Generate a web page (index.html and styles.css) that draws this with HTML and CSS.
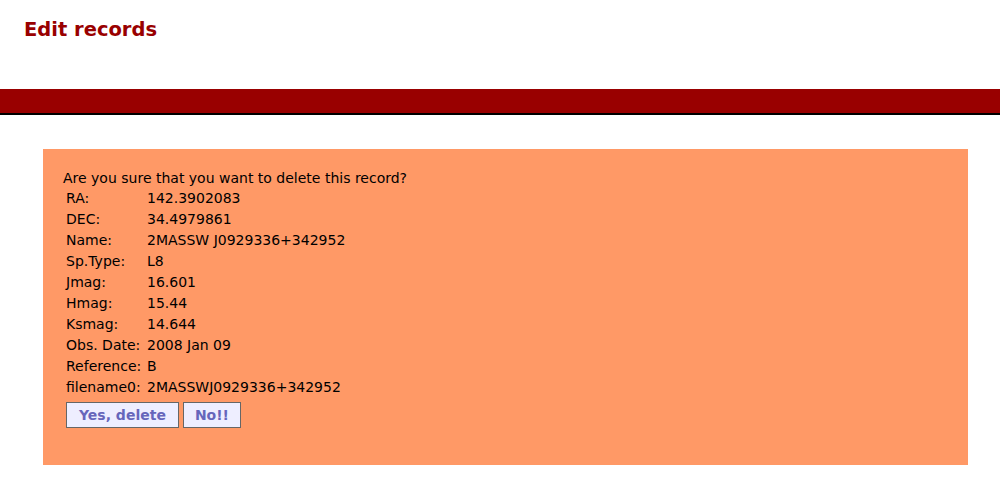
FILE: index.html
```html
<!DOCTYPE html>
<html lang="en">
<head>
    <meta charset="UTF-8">
    <title>Edit records</title>
    <link rel="stylesheet" href="styles.css">
</head>
<body>
<div class="header">
    <h1>Edit records</h1>
</div>
<div class="bar"></div>

<div class="content">
    <div class="confirm-box">
        <p class="question">Are you sure that you want to delete this record?</p>
        <table class="record">
            <tr><td>RA:</td><td>142.3902083</td></tr>
            <tr><td>DEC:</td><td>34.4979861</td></tr>
            <tr><td>Name:</td><td>2MASSW J0929336+342952</td></tr>
            <tr><td>Sp.Type:</td><td>L8</td></tr>
            <tr><td>Jmag:</td><td>16.601</td></tr>
            <tr><td>Hmag:</td><td>15.44</td></tr>
            <tr><td>Ksmag:</td><td>14.644</td></tr>
            <tr><td>Obs. Date:</td><td>2008 Jan 09</td></tr>
            <tr><td>Reference:</td><td>B</td></tr>
            <tr><td>filename0:</td><td>2MASSWJ0929336+342952</td></tr>
        </table>
        <div class="buttons">
            <button class="btn">Yes, delete</button>
            <button class="btn btn-no">No!!</button>
        </div>
    </div>
</div>
</body>
</html>
```

FILE: styles.css
```css
body {
    margin: 0;
    font-family: "DejaVu Sans", Verdana, sans-serif;
    font-size: 14px;
    color: #000;
    background-color: white;
}

.header {
    height: 89px;
    padding: 0 24px;
    box-sizing: border-box;
}

.header h1 {
    margin: 0;
    padding-top: 18px;
    font-size: 19.5px;
    font-weight: bold;
    color: #990000;
}

.bar {
    height: 24px;
    background-color: #990000;
    border-bottom: 2px solid #000;
}

.content {
    padding: 34px 32px 0 43px;
}

.confirm-box {
    background-color: #ff9966;
    padding: 21px 20px 35px 20px;
    min-height: 260px;
}

.question {
    margin: 0;
    line-height: 17px;
}

.record {
    border-spacing: 2px;
    margin-left: 0;
}

.record td {
    padding: 1px;
    line-height: 17px;
    vertical-align: top;
}

.record td:first-child {
    width: 77px;
    white-space: nowrap;
}

.buttons {
    display: flex;
    gap: 4px;
    margin-left: 3px;
    margin-top: 3px;
}

.btn {
    font-family: "DejaVu Sans", Verdana, sans-serif;
    font-size: 14px;
    font-weight: bold;
    color: #6666bb;
    background-color: #eeeeff;
    border: 1px solid #666;
    padding: 3px 12px;
    height: 26px;
}

.btn-no {
    padding: 3px 11px;
}
```
